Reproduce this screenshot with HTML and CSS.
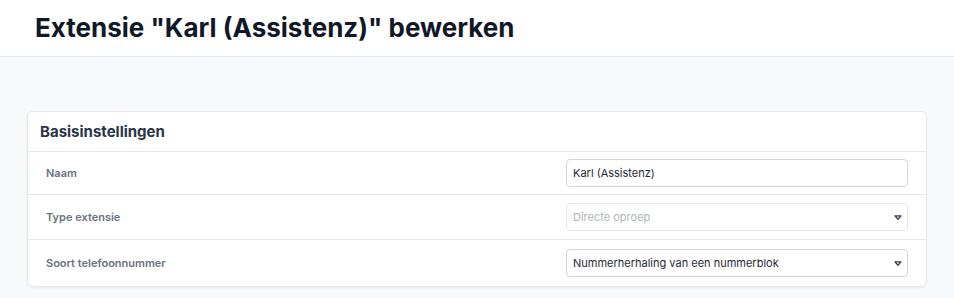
FILE: index.html
```html
<!DOCTYPE html>
<html lang="nl">

<head>
    <meta charset="UTF-8">
    <meta name="viewport" content="width=device-width, initial-scale=1.0">
    <title>Extensie bewerken</title>
    <link rel="stylesheet" href="styles.css">
</head>

<body>
    <header class="page-header">
        <h1>Extensie "Karl (Assistenz)" bewerken</h1>
    </header>

    <main class="page-content">
        <section class="card">
            <div class="card-header">
                <h2>Basisinstellingen</h2>
            </div>
            <div class="form-row first">
                <label for="naam">Naam</label>
                <div class="field">
                    <input type="text" id="naam" name="naam" value="Karl (Assistenz)">
                </div>
            </div>
            <div class="form-row">
                <label for="type">Type extensie</label>
                <div class="field select-field">
                    <select id="type" name="type" disabled>
                        <option>Directe oproep</option>
                    </select>
                    <svg class="chevron" width="8" height="5" viewBox="0 0 8 5">
                        <path d="M1 0.8 H7 L4 4.2 Z" fill="none" stroke="#374151" stroke-width="1.3" stroke-linejoin="round"/>
                    </svg>
                </div>
            </div>
            <div class="form-row last">
                <label for="soort">Soort telefoonnummer</label>
                <div class="field select-field">
                    <select id="soort" name="soort">
                        <option>Nummerherhaling van een nummerblok</option>
                    </select>
                    <svg class="chevron" width="8" height="5" viewBox="0 0 8 5">
                        <path d="M1 0.8 H7 L4 4.2 Z" fill="none" stroke="#374151" stroke-width="1.3" stroke-linejoin="round"/>
                    </svg>
                </div>
            </div>
        </section>
    </main>
</body>

</html>
```

FILE: styles.css
```css
body {
    font-family: Inter, 'Noto Sans', sans-serif;
    margin: 0;
    background-color: #f8f9fb;
    color: #111827;
}

.page-header {
    background: #fff;
    border-bottom: 1px solid #e5e7eb;
    height: 56px;
    padding: 0 35px;
    display: flex;
    align-items: center;
}

.page-header h1 {
    margin: 0 0 2px 0;
    font-size: 26px;
    font-weight: 700;
    color: #111827;
}

.page-content {
    padding: 54px 27px 10px 27px;
}

.card {
    background: #fff;
    border: 1px solid #e5e7eb;
    border-radius: 6px;
    box-shadow: 0 1px 2px rgba(0, 0, 0, 0.05);
    width: 898px;
}

.card-header {
    height: 39px;
    padding: 0 12px;
    display: flex;
    align-items: center;
    border-bottom: 1px solid #e5e7eb;
}

.card-header h2 {
    margin: 0;
    font-size: 15px;
    font-weight: 700;
    color: #283548;
}

.form-row {
    display: flex;
    align-items: center;
    justify-content: space-between;
    height: 44px;
    padding: 0 18px 0 18px;
    border-bottom: 1px solid #e5e7eb;
}

.form-row.first {
    height: 42px;
}

.form-row.last {
    border-bottom: none;
    height: 46px;
}

.form-row label {
    font-size: 11px;
    font-weight: 600;
    color: #6b7280;
}

.field {
    position: relative;
    width: 342px;
}

.field input,
.field select {
    width: 100%;
    box-sizing: border-box;
    height: 28px;
    padding: 0 6px;
    border: 1px solid #d1d5db;
    border-radius: 4px;
    background: #fff;
    font-family: Inter, 'Noto Sans', sans-serif;
    font-size: 11px;
    color: #1f2937;
    appearance: none;
    outline: none;
}

.field select:disabled {
    color: #b0b5bd;
    border-color: #e5e7eb;
    opacity: 1;
}

.chevron {
    position: absolute;
    right: 6px;
    top: 12px;
    pointer-events: none;
}
```
